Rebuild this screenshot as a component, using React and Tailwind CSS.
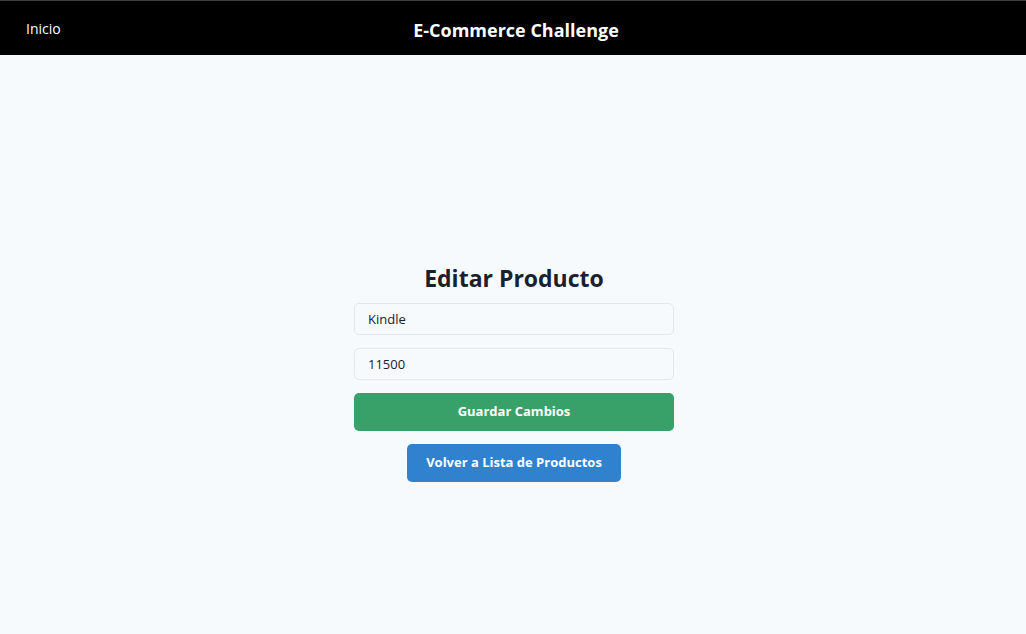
export default function App() {
  return (
    <div className="min-h-[634px] bg-[#f7fafc] font-['Open_Sans',sans-serif] text-[#1a202c]">
      <header className="relative flex h-[55px] items-center border-t border-[#3c3c3c] bg-black px-[26px]">
        <a href="#" className="text-[14px] text-white">
          Inicio
        </a>
        <h1 className="absolute left-1/2 top-[17px] ml-[3px] -translate-x-1/2 text-[18px] font-bold leading-[24px] text-white">
          E-Commerce Challenge
        </h1>
      </header>

      <main className="flex flex-col items-center pl-[2px] pt-[207px]">
        <h2 className="text-[23px] font-bold leading-[32px]">Editar Producto</h2>
        <form className="mt-[9px] flex w-[320px] flex-col gap-[13px]">
          <input
            defaultValue="Kindle"
            className="h-[32px] rounded-[5px] border border-[#e2e8f0] bg-[#f7fafc] px-[13px] text-[13px] outline-none"
          />
          <input
            defaultValue="11500"
            className="h-[32px] rounded-[5px] border border-[#e2e8f0] bg-[#f7fafc] px-[13px] text-[13px] outline-none"
          />
          <button type="button" className="h-[38px] rounded-[5px] bg-[#38a169] text-[13px] font-bold text-white">
            Guardar Cambios
          </button>
        </form>
        <button type="button" className="mt-[13px] h-[38px] w-[214px] rounded-[5px] bg-[#3182ce] text-[13px] font-bold text-white">
          Volver a Lista de Productos
        </button>
      </main>
    </div>
  );
}
